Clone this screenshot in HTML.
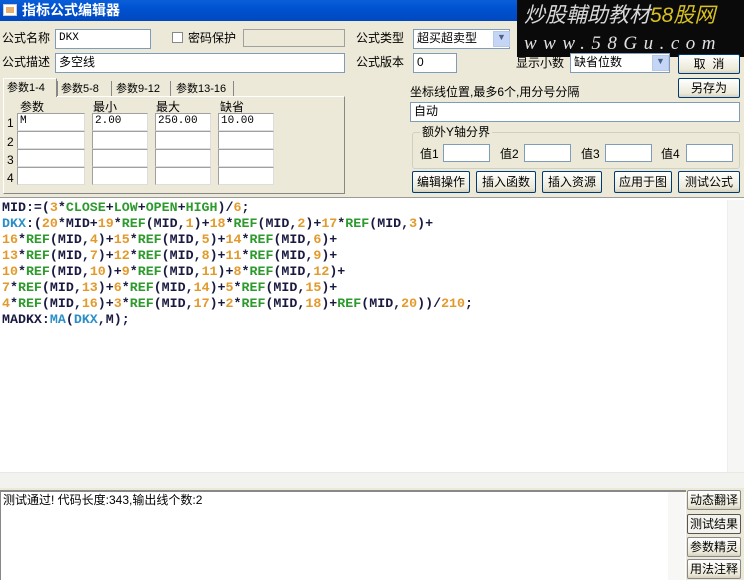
<!DOCTYPE html>
<html><head><meta charset="utf-8"><style>
*{margin:0;padding:0;box-sizing:border-box}
body{width:744px;height:580px;overflow:hidden;background:#ece9d8;font-family:"Liberation Sans","Noto Sans CJK SC",sans-serif;font-size:12px;color:#000;position:relative}
.a{position:absolute}
.t{position:absolute;white-space:nowrap;line-height:14px}
.in{position:absolute;background:#fff;border:1px solid #7f9db9;font-size:12px;padding-left:3px;line-height:16px;white-space:nowrap}
.btn{position:absolute;background:linear-gradient(#fff,#ece9d8 80%,#d6d0c0);border:1px solid #003c74;border-radius:2px;text-align:center;line-height:18px;white-space:nowrap}
.gin{position:absolute;background:#fff;border:1px solid #a0a0a0;border-right-color:#ddd;border-bottom-color:#ddd;font-family:"Liberation Mono",monospace;font-size:11px;padding-left:2px;line-height:15px}
.code{position:absolute;left:0;top:197px;width:744px;height:291px;background:#fff;border-top:1px solid #999}
.code pre{position:absolute;left:2px;top:2px;font-family:"Liberation Mono",monospace;font-weight:bold;font-size:13.3px;line-height:16px;color:#1a1a40}
.n{color:#e39a2c}.f{color:#2c9a2c}.b{color:#2a8ec8}
.dd{position:absolute;width:17px;background:#c5d5f5;border:1px solid #b8c8e8;color:#4d6185;font-size:9px;text-align:center}
</style></head><body>
<div class="a" style="left:0;top:0;width:744px;height:21px;background:linear-gradient(#0a5fd8,#0052d0 40%,#0048c0)"></div>
<div class="a" style="left:3px;top:4px;width:14px;height:12px;background:#fff;border:1px solid #ccc"><div style="margin:2px;height:6px;background:#e8b070"></div></div>
<div class="t" style="left:22px;top:3px;color:#fff;font-weight:bold;font-size:14px">指标公式编辑器</div>
<div class="a" style="left:517px;top:0;width:227px;height:57px;background:#0a0a0a"></div>
<div class="t" style="left:524px;top:4px;color:#d8d8d8;font-size:21px;font-style:italic;line-height:24px">炒股輔助教材<span style="color:#d8c020">58股网</span></div>
<div class="t" style="left:524px;top:33px;color:#e0e0e0;font-size:19px;font-style:italic;letter-spacing:6.5px;font-family:'Liberation Serif',serif;line-height:22px">www.58Gu.com</div>

<div class="t" style="left:2px;top:31px">公式名称</div>
<div class="in" style="left:55px;top:29px;width:96px;height:20px;font-family:'Liberation Mono';font-size:11px">DKX</div>
<div class="a" style="left:172px;top:32px;width:11px;height:11px;border:1px solid #888;background:#fff"></div>
<div class="t" style="left:188px;top:31px">密码保护</div>
<div class="a" style="left:243px;top:29px;width:102px;height:18px;border:1px solid #a0a0a0;background:#ece9d8"></div>
<div class="t" style="left:356px;top:31px">公式类型</div>
<div class="in" style="left:413px;top:29px;width:97px;height:20px">超买超卖型</div>
<div class="dd" style="left:493px;top:31px;height:16px">▼</div>
<div class="t" style="left:2px;top:55px">公式描述</div>
<div class="in" style="left:55px;top:53px;width:290px;height:20px">多空线</div>
<div class="t" style="left:356px;top:55px">公式版本</div>
<div class="in" style="left:413px;top:53px;width:44px;height:20px">0</div>
<div class="t" style="left:516px;top:56px">显示小数</div>
<div class="in" style="left:570px;top:53px;width:100px;height:20px">缺省位数</div>
<div class="dd" style="left:652px;top:55px;height:16px">▼</div>
<div class="btn" style="left:678px;top:54px;width:62px;height:20px">取&nbsp;&nbsp;消</div>
<div class="btn" style="left:678px;top:78px;width:62px;height:20px">另存为</div>

<div class="a" style="left:3px;top:96px;width:342px;height:98px;border:1px solid #fff;border-right-color:#888;border-bottom-color:#888"></div>
<div class="a" style="left:3px;top:78px;width:54px;height:19px;background:#ece9d8;border:1px solid #fff;border-bottom:none;border-right-color:#888"></div>
<div class="t" style="left:7px;top:81px;font-size:11px">参数1-4</div>
<div class="t" style="left:61px;top:82px;font-size:11px">参数5-8</div>
<div class="t" style="left:116px;top:82px;font-size:11px">参数9-12</div>
<div class="t" style="left:176px;top:82px;font-size:11px">参数13-16</div>
<div class="a" style="left:57px;top:81px;width:1px;height:15px;background:#888"></div>
<div class="a" style="left:111px;top:81px;width:1px;height:15px;background:#888"></div>
<div class="a" style="left:170px;top:81px;width:1px;height:15px;background:#888"></div>
<div class="a" style="left:233px;top:81px;width:1px;height:15px;background:#888"></div>
<div class="t" style="left:20px;top:100px">参数</div>
<div class="t" style="left:93px;top:100px">最小</div>
<div class="t" style="left:156px;top:100px">最大</div>
<div class="t" style="left:220px;top:100px">缺省</div>
<div class="t" style="left:7px;top:116px">1</div><div class="t" style="left:7px;top:135px">2</div><div class="t" style="left:7px;top:153px">3</div><div class="t" style="left:7px;top:171px">4</div>
<div class="gin" style="left:17px;top:113px;width:68px;height:18px">M</div>
<div class="gin" style="left:92px;top:113px;width:56px;height:18px">2.00</div>
<div class="gin" style="left:155px;top:113px;width:56px;height:18px">250.00</div>
<div class="gin" style="left:218px;top:113px;width:56px;height:18px">10.00</div>
<div class="gin" style="left:17px;top:131px;width:68px;height:18px"></div><div class="gin" style="left:92px;top:131px;width:56px;height:18px"></div><div class="gin" style="left:155px;top:131px;width:56px;height:18px"></div><div class="gin" style="left:218px;top:131px;width:56px;height:18px"></div>
<div class="gin" style="left:17px;top:149px;width:68px;height:18px"></div><div class="gin" style="left:92px;top:149px;width:56px;height:18px"></div><div class="gin" style="left:155px;top:149px;width:56px;height:18px"></div><div class="gin" style="left:218px;top:149px;width:56px;height:18px"></div>
<div class="gin" style="left:17px;top:167px;width:68px;height:18px"></div><div class="gin" style="left:92px;top:167px;width:56px;height:18px"></div><div class="gin" style="left:155px;top:167px;width:56px;height:18px"></div><div class="gin" style="left:218px;top:167px;width:56px;height:18px"></div>

<div class="t" style="left:410px;top:85px">坐标线位置,最多6个,用分号分隔</div>
<div class="in" style="left:410px;top:102px;width:330px;height:20px">自动</div>
<div class="a" style="left:412px;top:132px;width:328px;height:37px;border:1px solid #d0d0bf;border-radius:3px"></div>
<div class="t" style="left:420px;top:125px;background:#ece9d8;padding:0 2px">额外Y轴分界</div>
<div class="t" style="left:420px;top:147px">值1</div><div class="in" style="left:443px;top:144px;width:47px;height:18px"></div>
<div class="t" style="left:500px;top:147px">值2</div><div class="in" style="left:524px;top:144px;width:47px;height:18px"></div>
<div class="t" style="left:581px;top:147px">值3</div><div class="in" style="left:605px;top:144px;width:47px;height:18px"></div>
<div class="t" style="left:661px;top:147px">值4</div><div class="in" style="left:686px;top:144px;width:47px;height:18px"></div>
<div class="btn" style="left:412px;top:171px;width:58px;height:22px;line-height:20px">编辑操作</div>
<div class="btn" style="left:476px;top:171px;width:60px;height:22px;line-height:20px">插入函数</div>
<div class="btn" style="left:542px;top:171px;width:60px;height:22px;line-height:20px">插入资源</div>
<div class="btn" style="left:614px;top:171px;width:58px;height:22px;line-height:20px">应用于图</div>
<div class="btn" style="left:678px;top:171px;width:62px;height:22px;line-height:20px">测试公式</div>

<div class="code"><pre>MID:=(<span class="n">3</span>*<span class="f">CLOSE</span>+<span class="f">LOW</span>+<span class="f">OPEN</span>+<span class="f">HIGH</span>)/<span class="n">6</span>;
<span class="b">DKX</span>:(<span class="n">20</span>*MID+<span class="n">19</span>*<span class="f">REF</span>(MID,<span class="n">1</span>)+<span class="n">18</span>*<span class="f">REF</span>(MID,<span class="n">2</span>)+<span class="n">17</span>*<span class="f">REF</span>(MID,<span class="n">3</span>)+
<span class="n">16</span>*<span class="f">REF</span>(MID,<span class="n">4</span>)+<span class="n">15</span>*<span class="f">REF</span>(MID,<span class="n">5</span>)+<span class="n">14</span>*<span class="f">REF</span>(MID,<span class="n">6</span>)+
<span class="n">13</span>*<span class="f">REF</span>(MID,<span class="n">7</span>)+<span class="n">12</span>*<span class="f">REF</span>(MID,<span class="n">8</span>)+<span class="n">11</span>*<span class="f">REF</span>(MID,<span class="n">9</span>)+
<span class="n">10</span>*<span class="f">REF</span>(MID,<span class="n">10</span>)+<span class="n">9</span>*<span class="f">REF</span>(MID,<span class="n">11</span>)+<span class="n">8</span>*<span class="f">REF</span>(MID,<span class="n">12</span>)+
<span class="n">7</span>*<span class="f">REF</span>(MID,<span class="n">13</span>)+<span class="n">6</span>*<span class="f">REF</span>(MID,<span class="n">14</span>)+<span class="n">5</span>*<span class="f">REF</span>(MID,<span class="n">15</span>)+
<span class="n">4</span>*<span class="f">REF</span>(MID,<span class="n">16</span>)+<span class="n">3</span>*<span class="f">REF</span>(MID,<span class="n">17</span>)+<span class="n">2</span>*<span class="f">REF</span>(MID,<span class="n">18</span>)+<span class="f">REF</span>(MID,<span class="n">20</span>))/<span class="n">210</span>;
MADKX:<span class="b">MA</span>(<span class="b">DKX</span>,M);</pre>
<div class="a" style="right:0;top:2px;width:17px;height:272px;background:#f6f6f4;border-left:1px solid #eee"></div>
<div class="a" style="left:0;top:274px;width:744px;height:16px;background:#f2f2ee;border-top:1px solid #e8e8e8"></div>
</div>

<div class="a" style="left:0;top:490px;width:686px;height:90px;background:#fff;border-top:2px solid #888;border-left:1px solid #888"></div>
<div class="t" style="left:3px;top:493px">测试通过! 代码长度:343,输出线个数:2</div>
<div class="a" style="left:668px;top:492px;width:17px;height:88px;background:#f7f7f5"></div>
<div class="btn" style="left:687px;top:490px;width:54px;height:20px;border-color:#888">动态翻译</div>
<div class="btn" style="left:687px;top:514px;width:54px;height:20px;border-color:#555;background:#f4f3ee">测试结果</div>
<div class="btn" style="left:687px;top:537px;width:54px;height:20px;border-color:#888">参数精灵</div>
<div class="btn" style="left:687px;top:559px;width:54px;height:20px;border-color:#888">用法注释</div>
</body></html>
